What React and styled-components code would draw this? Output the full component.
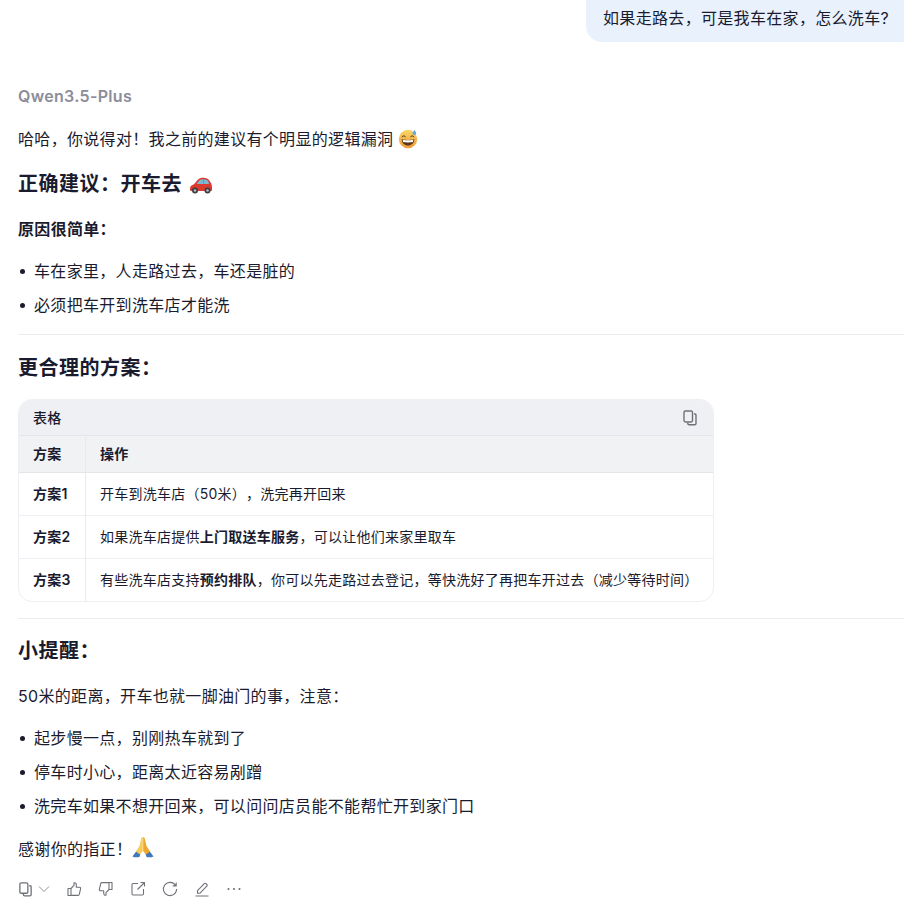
import React from "react";
import styled, { createGlobalStyle } from "styled-components";

const rows = [
  { name: "方案1", text: <>开车到洗车店（50米），洗完再开回来</> },
  { name: "方案2", text: <>如果洗车店提供<b>上门取送车服务</b>，可以让他们来家里取车</> },
  { name: "方案3", text: <>有些洗车店支持<b>预约排队</b>，你可以先走路过去登记，等快洗好了再把车开过去（减少等待时间）</> },
];

export default function App() {
  return (
    <Page>
      <GlobalStyle />
      <UserRow>
        <Bubble>如果走路去，可是我车在家，怎么洗车?</Bubble>
      </UserRow>
      <ModelName>Qwen3.5-Plus</ModelName>
      <Paragraph $top={19}>
        哈哈，你说得对！我之前的建议有个明显的逻辑漏洞 <SweatEmoji />
      </Paragraph>
      <Heading $top={19}>
        正确建议：开车去 <CarEmoji />
      </Heading>
      <Strong>原因很简单：</Strong>
      <List $top={18}>
        <li>车在家里，人走路过去，车还是脏的</li>
        <li>必须把车开到洗车店才能洗</li>
      </List>
      <Divider $top={17} />
      <Heading $top={19}>更合理的方案：</Heading>
      <TableCard>
        <TableTitle>
          表格
          <CopyIcon size={16} color="#6f7178" />
        </TableTitle>
        <Table>
          <thead>
            <tr>
              <th>方案</th>
              <th>操作</th>
            </tr>
          </thead>
          <tbody>
            {rows.map((row) => (
              <tr key={row.name}>
                <td>
                  <b>{row.name}</b>
                </td>
                <td>{row.text}</td>
              </tr>
            ))}
          </tbody>
        </Table>
      </TableCard>
      <Divider $top={16} />
      <Heading $top={18}>小提醒：</Heading>
      <Paragraph $top={19}>50米的距离，开车也就一脚油门的事，注意：</Paragraph>
      <List $top={18}>
        <li>起步慢一点，别刚热车就到了</li>
        <li>停车时小心，距离太近容易剐蹭</li>
        <li>洗完车如果不想开回来，可以问问店员能不能帮忙开到家门口</li>
      </List>
      <Paragraph $top={18}>
        感谢你的指正！ <PrayEmoji />
      </Paragraph>
      <Actions>
        <CopyGroup>
          <CopyIcon size={15} color="#6f7178" />
          <svg width="12" height="12" viewBox="0 0 12 12" fill="none" stroke="#8f919b" strokeWidth="1">
            <path d="M1 3.500 6 8.500 11 3.500" />
          </svg>
        </CopyGroup>
        <ActionIcon>
          <path d="M5 7.500H2v7h3m0-7v7m0-7 3-3.200V1.800c1.400-.3 2.300.6 2.300 1.900v2.500h3.200c.8 0 1.300.7 1.100 1.500l-1.300 5.700c-.2.6-.6 1-1.200 1H5" />
        </ActionIcon>
        <ActionIcon>
          <path d="M11 8.500h3v-7h-3m0 7v-7m0 7-3 3.200v2.500c-1.400.3-2.300-.6-2.300-1.900V9.800H2.500c-.8 0-1.300-.7-1.100-1.500l1.300-5.700c.2-.6.6-1 1.200-1H11" />
        </ActionIcon>
        <ActionIcon>
          <path d="M8 2.500H3.200c-.7 0-1.200.5-1.200 1.200v9.100c0 .7.5 1.200 1.200 1.200h9.100c.7 0 1.200-.5 1.200-1.200V8M7.500 8.500 14 2M10.500 1.500H14.500V5.500" />
        </ActionIcon>
        <ActionIcon>
          <path d="M13.600 4.500A6.600 6.600 0 1 0 14.600 8M14.200 1.500v3.400h-3.400" />
        </ActionIcon>
        <ActionIcon>
          <path d="M1.500 15h13M3.500 12.200V9.600l6.800-6.900c.5-.5 1.200-.5 1.700 0l.8.8c.5.5.5 1.200 0 1.700l-6.800 7H3.500Z" />
        </ActionIcon>
        <ActionIcon>
          <circle cx="2.500" cy="8" r=".5" />
          <circle cx="8" cy="8" r=".5" />
          <circle cx="13.500" cy="8" r=".5" />
        </ActionIcon>
      </Actions>
    </Page>
  );
}

function ActionIcon({ children }) {
  return (
    <svg width="16" height="16" viewBox="0 0 16 16" fill="none" stroke="#6f7178" strokeWidth="1.1" strokeLinejoin="round">
      {children}
    </svg>
  );
}

function CopyIcon({ size, color }) {
  return (
    <svg width={size} height={size} viewBox="0 0 16 16" fill="none" stroke={color} strokeWidth="1.4">
      <rect x="2" y="1" width="8.500" height="11" rx="1.400" />
      <path d="M12 4h1c.6 0 1 .4 1 1v8.500c0 .8-.5 1.200-1.200 1.200H7c-.7 0-1.200-.5-1.200-1.200V12.600" />
    </svg>
  );
}

function SweatEmoji() {
  return (
    <EmojiSvg width="20" height="20" viewBox="0 0 20 20">
      <defs>
        <linearGradient id="sweatFace" x1="0" y1="0" x2="0" y2="1">
          <stop offset="0" stopColor="#f9d667" />
          <stop offset="1" stopColor="#ee9a3a" />
        </linearGradient>
      </defs>
      <circle cx="10" cy="10" r="9.200" fill="url(#sweatFace)" />
      <path d="M3.600 10.200c4 1 8.800 1 12.800 0-.2 3.800-3 6.300-6.400 6.300s-6.200-2.500-6.400-6.300Z" fill="#5b3518" />
      <path d="M4.600 10.700c3.500.7 7.300.7 10.800 0l-.5 2.300c-3 .6-6.800.6-9.800 0Z" fill="#fff" />
      <path d="M4 8.200c.6-1.800 3-1.800 3.600 0M12.400 8.200c.6-1.800 3-1.800 3.600 0" fill="none" stroke="#5b3518" strokeWidth="1" />
      <path d="M16.400 1c.8 1.300 1.800 2.100 1.800 3.200a1.800 1.800 0 0 1-3.600 0c0-1.100 1-1.900 1.800-3.200Z" fill="#59a8ec" />
    </EmojiSvg>
  );
}

function CarEmoji() {
  return (
    <CarSvg width="24" height="20" viewBox="0 0 24 20">
      <path d="M1 13.500c0-2.200 1.600-3.600 4-4.300L8.500 5c1.500-1.700 3.500-2.300 6-2.300 3 0 5.200 1.200 6.300 3.600 1.300 1.800 2.200 3.700 2.200 6v2.500c0 .8-.5 1.200-1.200 1.200H2.500c-.9 0-1.500-.5-1.500-1.300Z" fill="#dc3a2e" />
      <path d="M7.500 9 10 5.800c1.200-1.200 2.500-1.500 4.500-1.500l-.5 4.700ZM15 4.300c2.200 0 3.800.8 4.600 2.700L20 9h-5.700Z" fill="#7fb6d2" />
      <circle cx="6" cy="15.500" r="3" fill="#3c3c44" />
      <circle cx="6" cy="15.500" r="1.300" fill="#b9bcc4" />
      <circle cx="18.500" cy="15.500" r="3" fill="#3c3c44" />
      <circle cx="18.500" cy="15.500" r="1.300" fill="#b9bcc4" />
    </CarSvg>
  );
}

function PrayEmoji() {
  return (
    <PraySvg width="22" height="22" viewBox="0 0 22 22">
      <path d="M.5 20.500 4.500 15l4 2.500-1 3.500c-2.500.6-5 .5-7-.5ZM21.500 20.500 17.500 15l-4 2.500 1 3.500c2.500.6 5 .5 7-.5Z" fill="#3f79bd" />
      <path d="M10.800 1c-.9 0-1.500.8-1.700 1.900L7.500 10 3.800 15.500l4.200 3 2.800-3.500Z" fill="#f8cb5c" />
      <path d="M11.200 1c.9 0 1.500.8 1.700 1.900L14.500 10l3.700 5.500-4.200 3-2.800-3.500Z" fill="#eda92f" />
    </PraySvg>
  );
}

const GlobalStyle = createGlobalStyle`
  html, body {
    margin: 0;
    background: #fff;
  }
  body {
    font-family: Inter, "Noto Sans CJK SC", sans-serif;
    color: #1a1b2e;
    overflow: hidden;
    text-spacing-trim: space-all;
  }
`;

const Page = styled.div`
  width: 904px;
  height: 910px;
  overflow: hidden;
  padding-left: 18px;
  box-sizing: border-box;
  font-size: 16px;
  line-height: 24px;
  letter-spacing: 0.32px;
`;

const UserRow = styled.div`
  display: flex;
  justify-content: flex-end;
`;

const Bubble = styled.div`
  height: 42px;
  padding: 6px 15px 0 17px;
  box-sizing: border-box;
  background: #e9f1fd;
  border-radius: 0 0 0 16px;
`;

const ModelName = styled.div`
  margin-top: 42px;
  font-weight: 600;
  color: #8b8d99;
`;

const Paragraph = styled.p`
  margin: ${(p) => p.$top}px 0 0;
`;

const Heading = styled.h2`
  margin: ${(p) => p.$top}px 0 0;
  font-size: 20px;
  line-height: 28px;
  font-weight: 600;
  letter-spacing: 0.5px;
`;

const Strong = styled.div`
  margin-top: 19px;
  font-weight: 600;
`;

const List = styled.ul`
  margin: ${(p) => p.$top}px 0 0;
  padding: 0;
  list-style: none;
  display: flex;
  flex-direction: column;
  gap: 10px;

  li {
    position: relative;
    padding-left: 16px;
  }
  li::before {
    content: "";
    position: absolute;
    left: 2px;
    top: 10px;
    width: 5px;
    height: 5px;
    border-radius: 50%;
    background: #1a1b2e;
  }
`;

const Divider = styled.hr`
  margin: ${(p) => p.$top}px 0 0;
  border: 0;
  border-top: 1px solid #ececf0;
`;

const TableCard = styled.div`
  margin-top: 17px;
  width: 696px;
  box-sizing: border-box;
  border: 1px solid #eeeff2;
  border-radius: 14px;
  overflow: hidden;
`;

const TableTitle = styled.div`
  height: 35px;
  padding: 0 15px 0 14px;
  display: flex;
  align-items: center;
  justify-content: space-between;
  background: #eff0f3;
  font-size: 14px;
  font-weight: 500;
`;

const Table = styled.table`
  width: 100%;
  border-collapse: collapse;
  font-size: 14px;
  line-height: 20px;
  letter-spacing: 0.25px;
  white-space: nowrap;

  th {
    height: 36px;
    padding: 0 14px;
    background: #f1f2f4;
    text-align: left;
    font-weight: 600;
    border-top: 1px solid #e4e5e9;
    border-bottom: 1px solid #e4e5e9;
  }
  td {
    height: 42px;
    padding: 0 14px;
    border-top: 1px solid #eeeff2;
  }
  tbody tr:first-child td {
    border-top: 0;
  }
  th:first-child,
  td:first-child {
    width: 38px;
    border-right: 1px solid #e9eaee;
  }
  b {
    font-weight: 600;
  }
`;

const Actions = styled.div`
  margin-top: 20px;
  display: flex;
  align-items: center;
  gap: 16px;
`;

const CopyGroup = styled.div`
  display: flex;
  align-items: center;
  gap: 5px;
`;

const EmojiSvg = styled.svg`
  vertical-align: -4px;
`;

const CarSvg = styled(EmojiSvg)`
  margin-left: 1px;
`;

const PraySvg = styled(EmojiSvg)`
  vertical-align: -3px;
  margin-left: -5px;
`;
